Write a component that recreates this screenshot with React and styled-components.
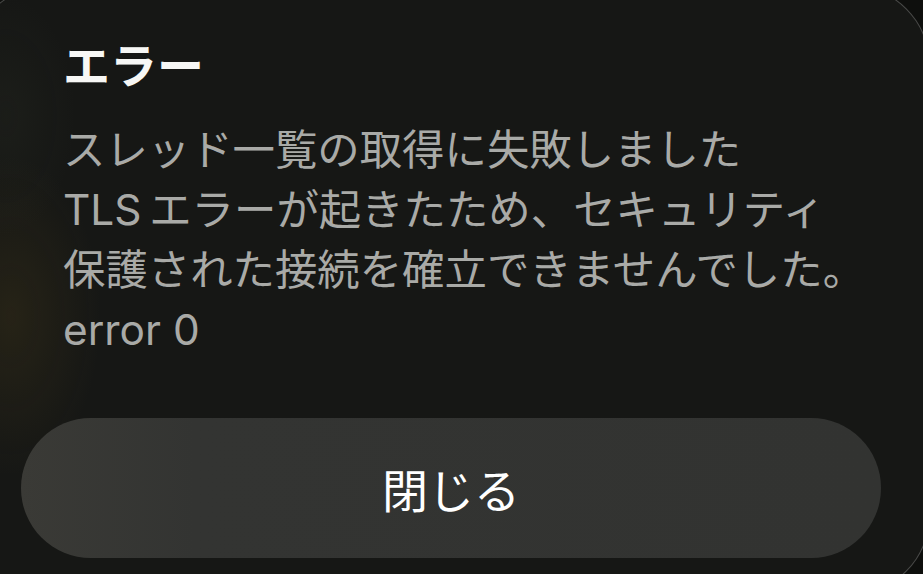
import React from "react";
import styled, { createGlobalStyle } from "styled-components";

const GlobalStyle = createGlobalStyle`
  html, body {
    margin: 0;
    padding: 0;
    background: #0d0e0c;
    overflow: hidden;
  }
  * { box-sizing: border-box; }
`;

const Viewport = styled.div`
  width: 923px;
  height: 574px;
  overflow: hidden;
  background: #0e0f0d;
  font-family: "Inter", "Noto Sans CJK JP", sans-serif;
`;

const Sheet = styled.div`
  width: 960px;
  height: 610px;
  margin: -15px 0 0 -30px;
  border-radius: 80px;
  border: 1.5px solid rgba(255, 255, 255, 0.22);
  background:
    radial-gradient(ellipse 90px 160px at 40px 330px, rgba(120, 95, 30, 0.16), transparent 100%),
    radial-gradient(ellipse 70px 120px at 35px 130px, rgba(90, 100, 70, 0.08), transparent 100%),
    #161715;
  padding: 52px 48px 0 50px;
  display: flex;
  flex-direction: column;
`;

const Content = styled.div`
  padding: 0 42px;
  display: flex;
  flex-direction: column;
  gap: 26px;
`;

const Title = styled.h1`
  margin: 0;
  font-size: 47px;
  line-height: 56px;
  font-weight: 700;
  color: #f7f7f5;
`;

const Message = styled.p`
  margin: 0;
  font-size: 42.4px;
  line-height: 60px;
  font-weight: 400;
  color: #a9aaa7;
  white-space: nowrap;
`;

const CloseButton = styled.button`
  margin-top: 58px;
  height: 140px;
  width: 100%;
  border: none;
  border-radius: 70px;
  background: linear-gradient(90deg, #3a3a36 0%, #333432 20%, #323331 100%);
  color: #ffffff;
  font-family: inherit;
  font-size: 46px;
  font-weight: 400;
  display: flex;
  align-items: center;
  justify-content: center;
  cursor: pointer;
`;

export default function App() {
  return (
    <>
      <GlobalStyle />
      <Viewport>
        <Sheet>
          <Content>
            <Title>エラー</Title>
            <Message>
              スレッド一覧の取得に失敗しました
              <br />
              TLS{"\u2009"}エラーが起きたため、セキュリティ
              <br />
              保護された接続を確立できませんでした。
              <br />
              error 0
            </Message>
          </Content>
          <CloseButton>閉じる</CloseButton>
        </Sheet>
      </Viewport>
    </>
  );
}
